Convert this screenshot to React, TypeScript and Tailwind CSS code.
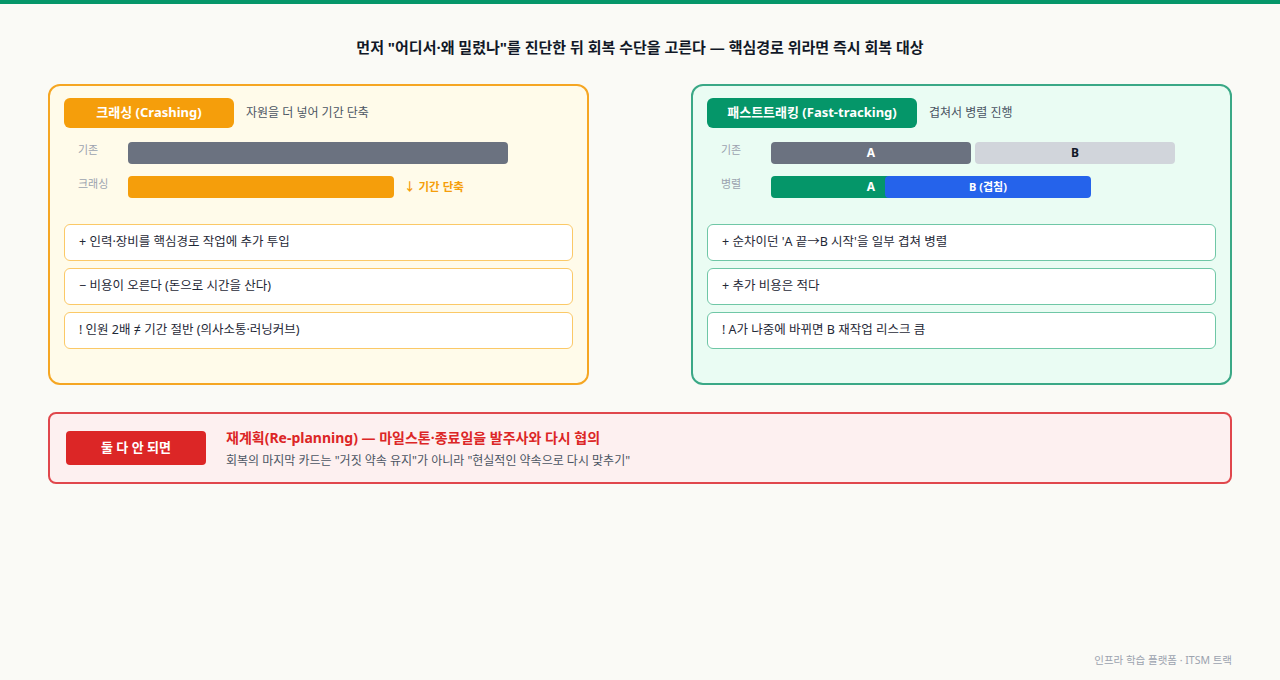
const font = { fontFamily: '"Noto Sans", "Noto Sans CJK KR", sans-serif' };

function Card({ text, tone }: { text: string; tone: "amber" | "green" }) {
  return (
    <div
      className={`h-[37px] flex items-center px-[14px] rounded-md bg-white text-[12.5px] text-[#1f2937] border-[1.5px] ${
        tone === "amber" ? "border-[#fbc967]" : "border-[#6fc7a6]"
      }`}
    >
      {text}
    </div>
  );
}

export default function App() {
  return (
    <div className="w-[1280px] h-[680px] bg-[#fafaf6] flex flex-col border-t-4 border-[#059669]" style={font}>
      <h1 className="text-center text-[15px] font-bold text-[#111827] mt-[32px] h-[22px] leading-[22px]">
        먼저 "어디서·왜 밀렸나"를 진단한 뒤 회복 수단을 고른다 — 핵심경로 위라면 즉시 회복 대상
      </h1>
      <div className="flex justify-between mx-[48px] mt-[26px]">
        {/* Crashing */}
        <div className="w-[541px] h-[301px] rounded-xl border-2 border-[#f5a623] bg-[#fffbea] px-[14px] pt-[12px]">
          <div className="flex items-center">
            <div className="w-[170px] h-[30px] rounded-md bg-[#f59e0b] text-white text-[13px] font-bold flex items-center justify-center">
              크래싱 (Crashing)
            </div>
            <span className="ml-3 text-[12px] text-[#4b5563]">자원을 더 넣어 기간 단축</span>
          </div>
          <div className="mt-[14px] flex items-start">
            <span className="w-[64px] pl-[14px] text-[11px] text-[#9ca3af] leading-[16px]">기존</span>
            <div className="w-[380px] h-[22px] rounded bg-[#6b7280]" />
          </div>
          <div className="mt-[12px] flex items-start">
            <span className="w-[64px] pl-[14px] text-[11px] text-[#9ca3af] leading-[16px]">크래싱</span>
            <div className="w-[266px] h-[22px] rounded bg-[#f59e0b]" />
            <span className="ml-[10px] mt-[2px] text-[11.5px] font-bold text-[#f59e0b]">↓ 기간 단축</span>
          </div>
          <div className="mt-[26px] flex flex-col gap-[7px] w-[509px]">
            <Card tone="amber" text="+ 인력·장비를 핵심경로 작업에 추가 투입" />
            <Card tone="amber" text="− 비용이 오른다 (돈으로 시간을 산다)" />
            <Card tone="amber" text="! 인원 2배 ≠ 기간 절반 (의사소통·러닝커브)" />
          </div>
        </div>
        {/* Fast-tracking */}
        <div className="w-[541px] h-[301px] rounded-xl border-2 border-[#3aa886] bg-[#eafcf3] px-[14px] pt-[12px]">
          <div className="flex items-center">
            <div className="w-[210px] h-[30px] rounded-md bg-[#059669] text-white text-[13px] font-bold flex items-center justify-center">
              패스트트래킹 (Fast-tracking)
            </div>
            <span className="ml-3 text-[12px] text-[#4b5563]">겹쳐서 병렬 진행</span>
          </div>
          <div className="mt-[14px] flex items-start">
            <span className="w-[64px] pl-[14px] text-[11px] text-[#9ca3af] leading-[16px]">기존</span>
            <div className="flex gap-[4px]">
              <div className="w-[200px] h-[22px] rounded bg-[#6b7280] text-white text-[12px] font-bold flex items-center justify-center">A</div>
              <div className="w-[200px] h-[22px] rounded bg-[#d1d5db] text-[#111827] text-[12px] font-bold flex items-center justify-center">B</div>
            </div>
          </div>
          <div className="mt-[12px] flex items-start">
            <span className="w-[64px] pl-[14px] text-[11px] text-[#9ca3af] leading-[16px]">병렬</span>
            <div className="relative w-[320px] h-[22px]">
              <div className="w-[200px] h-[22px] rounded bg-[#059669] text-white text-[12px] font-bold flex items-center justify-center">A</div>
              <div className="absolute left-[114px] top-0 w-[206px] h-[22px] rounded bg-[#2563eb] text-white text-[11px] font-bold flex items-center justify-center">B (겹침)</div>
            </div>
          </div>
          <div className="mt-[26px] flex flex-col gap-[7px] w-[509px]">
            <Card tone="green" text="+ 순차이던 'A 끝→B 시작'을 일부 겹쳐 병렬" />
            <Card tone="green" text="+ 추가 비용은 적다" />
            <Card tone="green" text="! A가 나중에 바뀌면 B 재작업 리스크 큼" />
          </div>
        </div>
      </div>
      <div className="mx-[48px] mt-[27px] h-[72px] rounded-lg border-2 border-[#e0474c] bg-[#fdf0f0] flex items-center px-[16px]">
        <div className="w-[140px] h-[34px] rounded bg-[#dc2626] text-white text-[13px] font-bold flex items-center justify-center">
          둘 다 안 되면
        </div>
        <div className="ml-[20px] flex flex-col gap-[4px]">
          <span className="text-[14px] font-bold text-[#dc2626]">재계획(Re-planning) — 마일스톤·종료일을 발주사와 다시 협의</span>
          <span className="text-[12px] text-[#4b5563]">회복의 마지막 카드는 "거짓 약속 유지"가 아니라 "현실적인 약속으로 다시 맞추기"</span>
        </div>
      </div>
      <div className="mt-auto mb-[11px] mr-[48px] text-right text-[10.5px] text-[#9ca3af]">인프라 학습 플랫폼 · ITSM 트랙</div>
    </div>
  );
}
